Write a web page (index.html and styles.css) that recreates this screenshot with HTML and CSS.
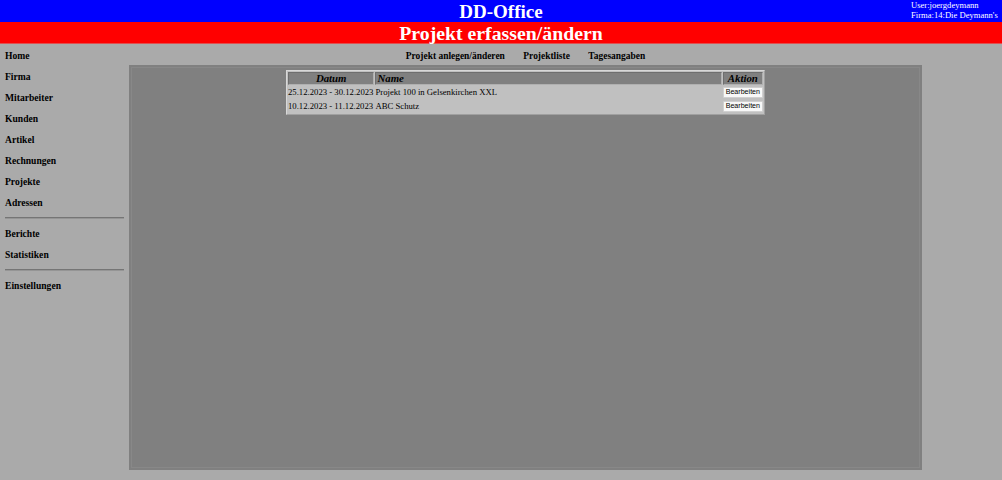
FILE: index.html
```html
<!DOCTYPE html>
<html lang="de">
<head>
<meta charset="utf-8">
<title>DD-Office</title>
<link rel="stylesheet" href="styles.css">
</head>
<body>
<header class="top">
  <div class="brand">DD-Office</div>
  <div class="userinfo">
    <div>User:joergdeymann</div>
    <div>Firma:14:Die Deymann's</div>
  </div>
</header>
<div class="pagetitle">Projekt erfassen/ändern</div>
<div class="layout">
  <nav class="sidebar">
    <a class="side-link" href="#">Home</a>
    <a class="side-link" href="#">Firma</a>
    <a class="side-link" href="#">Mitarbeiter</a>
    <a class="side-link" href="#">Kunden</a>
    <a class="side-link" href="#">Artikel</a>
    <a class="side-link" href="#">Rechnungen</a>
    <a class="side-link" href="#">Projekte</a>
    <a class="side-link" href="#">Adressen</a>
    <div class="side-sep"></div>
    <a class="side-link" href="#">Berichte</a>
    <a class="side-link" href="#">Statistiken</a>
    <div class="side-sep"></div>
    <a class="side-link" href="#">Einstellungen</a>
  </nav>
  <div class="content">
    <nav class="subnav">
      <a class="sub-link" href="#">Projekt anlegen/änderen</a>
      <a class="sub-link" href="#">Projektliste</a>
      <a class="sub-link" href="#">Tagesangaben</a>
    </nav>
    <main class="panel">
      <table class="list">
        <thead>
          <tr>
            <th class="col-date">Datum</th>
            <th class="col-name">Name</th>
            <th class="col-action">Aktion</th>
          </tr>
        </thead>
        <tbody>
          <tr>
            <td class="date">25.12.2023 - 30.12.2023</td>
            <td>Projekt 100 in Gelsenkirchen XXL</td>
            <td class="action"><button class="btn">Bearbeiten</button></td>
          </tr>
          <tr>
            <td class="date">10.12.2023 - 11.12.2023</td>
            <td>ABC Schutz</td>
            <td class="action"><button class="btn">Bearbeiten</button></td>
          </tr>
        </tbody>
      </table>
    </main>
  </div>
</div>
</body>
</html>
```

FILE: styles.css
```css
html, body {
  margin: 0;
  padding: 0;
}
body {
  background: #aaaaaa;
  font-family: "Liberation Serif", "Times New Roman", serif;
  color: #000;
  height: 480px;
  overflow: hidden;
}
.top {
  position: relative;
  background: #0000ff;
  height: 22px;
  color: #fff;
  text-align: center;
}
.brand {
  font-weight: bold;
  font-size: 19px;
  line-height: 23px;
}
.userinfo {
  position: absolute;
  top: 0;
  left: 911px;
  text-align: left;
  font-size: 8.6px;
  line-height: 10px;
  white-space: nowrap;
}
.pagetitle {
  background: #ff0000;
  color: #fff;
  height: 22px;
  line-height: 22px;
  text-align: center;
  font-weight: bold;
  font-size: 19.8px;
  border-bottom: 1px solid #e05050;
  box-sizing: border-box;
}
.layout {
  display: flex;
  height: 436px;
}
.sidebar {
  width: 129px;
  flex: none;
  display: flex;
  flex-direction: column;
  padding-top: 1px;
}
.side-link {
  display: block;
  height: 21px;
  line-height: 22px;
  padding-left: 5px;
  font-weight: bold;
  font-size: 9.6px;
  color: #000;
  text-decoration: none;
}
.side-sep {
  margin: 4px 5px 4px 5px;
  border-top: 1px solid #757575;
  border-bottom: 1px solid #959595;
}
.content {
  flex: none;
  width: 793px;
  display: flex;
  flex-direction: column;
}
.subnav {
  height: 21px;
  display: flex;
  justify-content: center;
  align-items: center;
  gap: 18.5px;
  padding-top: 2px;
  box-sizing: border-box;
}
.sub-link {
  font-weight: bold;
  font-size: 9.45px;
  color: #000;
  text-decoration: none;
}
.panel {
  background: #808080;
  height: 405px;
  box-sizing: border-box;
  padding-top: 5px;
  display: flex;
  justify-content: center;
  align-items: flex-start;
  box-shadow: inset 0 0 0 2px #808080, inset 0 0 0 3px #888888;
}
.list {
  width: 479px;
  background: #c0c0c0;
  border: 1px solid;
  border-color: #d8d8d8 #a0a0a0 #a0a0a0 #d8d8d8;
  border-spacing: 1px;
  font-size: 8.7px;
}
.list th {
  background: #808080;
  font-style: italic;
  font-weight: bold;
  font-size: 10.8px;
  height: 11px;
  padding: 0 1px;
  line-height: 11px;
  border: 1px solid;
  border-color: #6e6e6e #b0b0b0 #b0b0b0 #6e6e6e;
}
.col-date {
  width: 1%;
}
.col-name {
  text-align: left;
}
.col-action {
  width: 1%;
}
.list td {
  padding: 0 1px 0 0;
  height: 13px;
  line-height: 11px;
  white-space: nowrap;
  vertical-align: middle;
}
.list td.date {
  padding-left: 0;
}
.list td.action {
  text-align: center;
  padding: 0;
}
.btn {
  font-family: "Liberation Sans", Arial, sans-serif;
  font-size: 7.1px;
  height: 11px;
  line-height: 9px;
  padding: 0 2px;
  background: #f8f8f8;
  border: 1px solid #d0d0d0;
  border-radius: 1px;
  color: #000;
  display: block;
  margin: 0 auto;
}
```
